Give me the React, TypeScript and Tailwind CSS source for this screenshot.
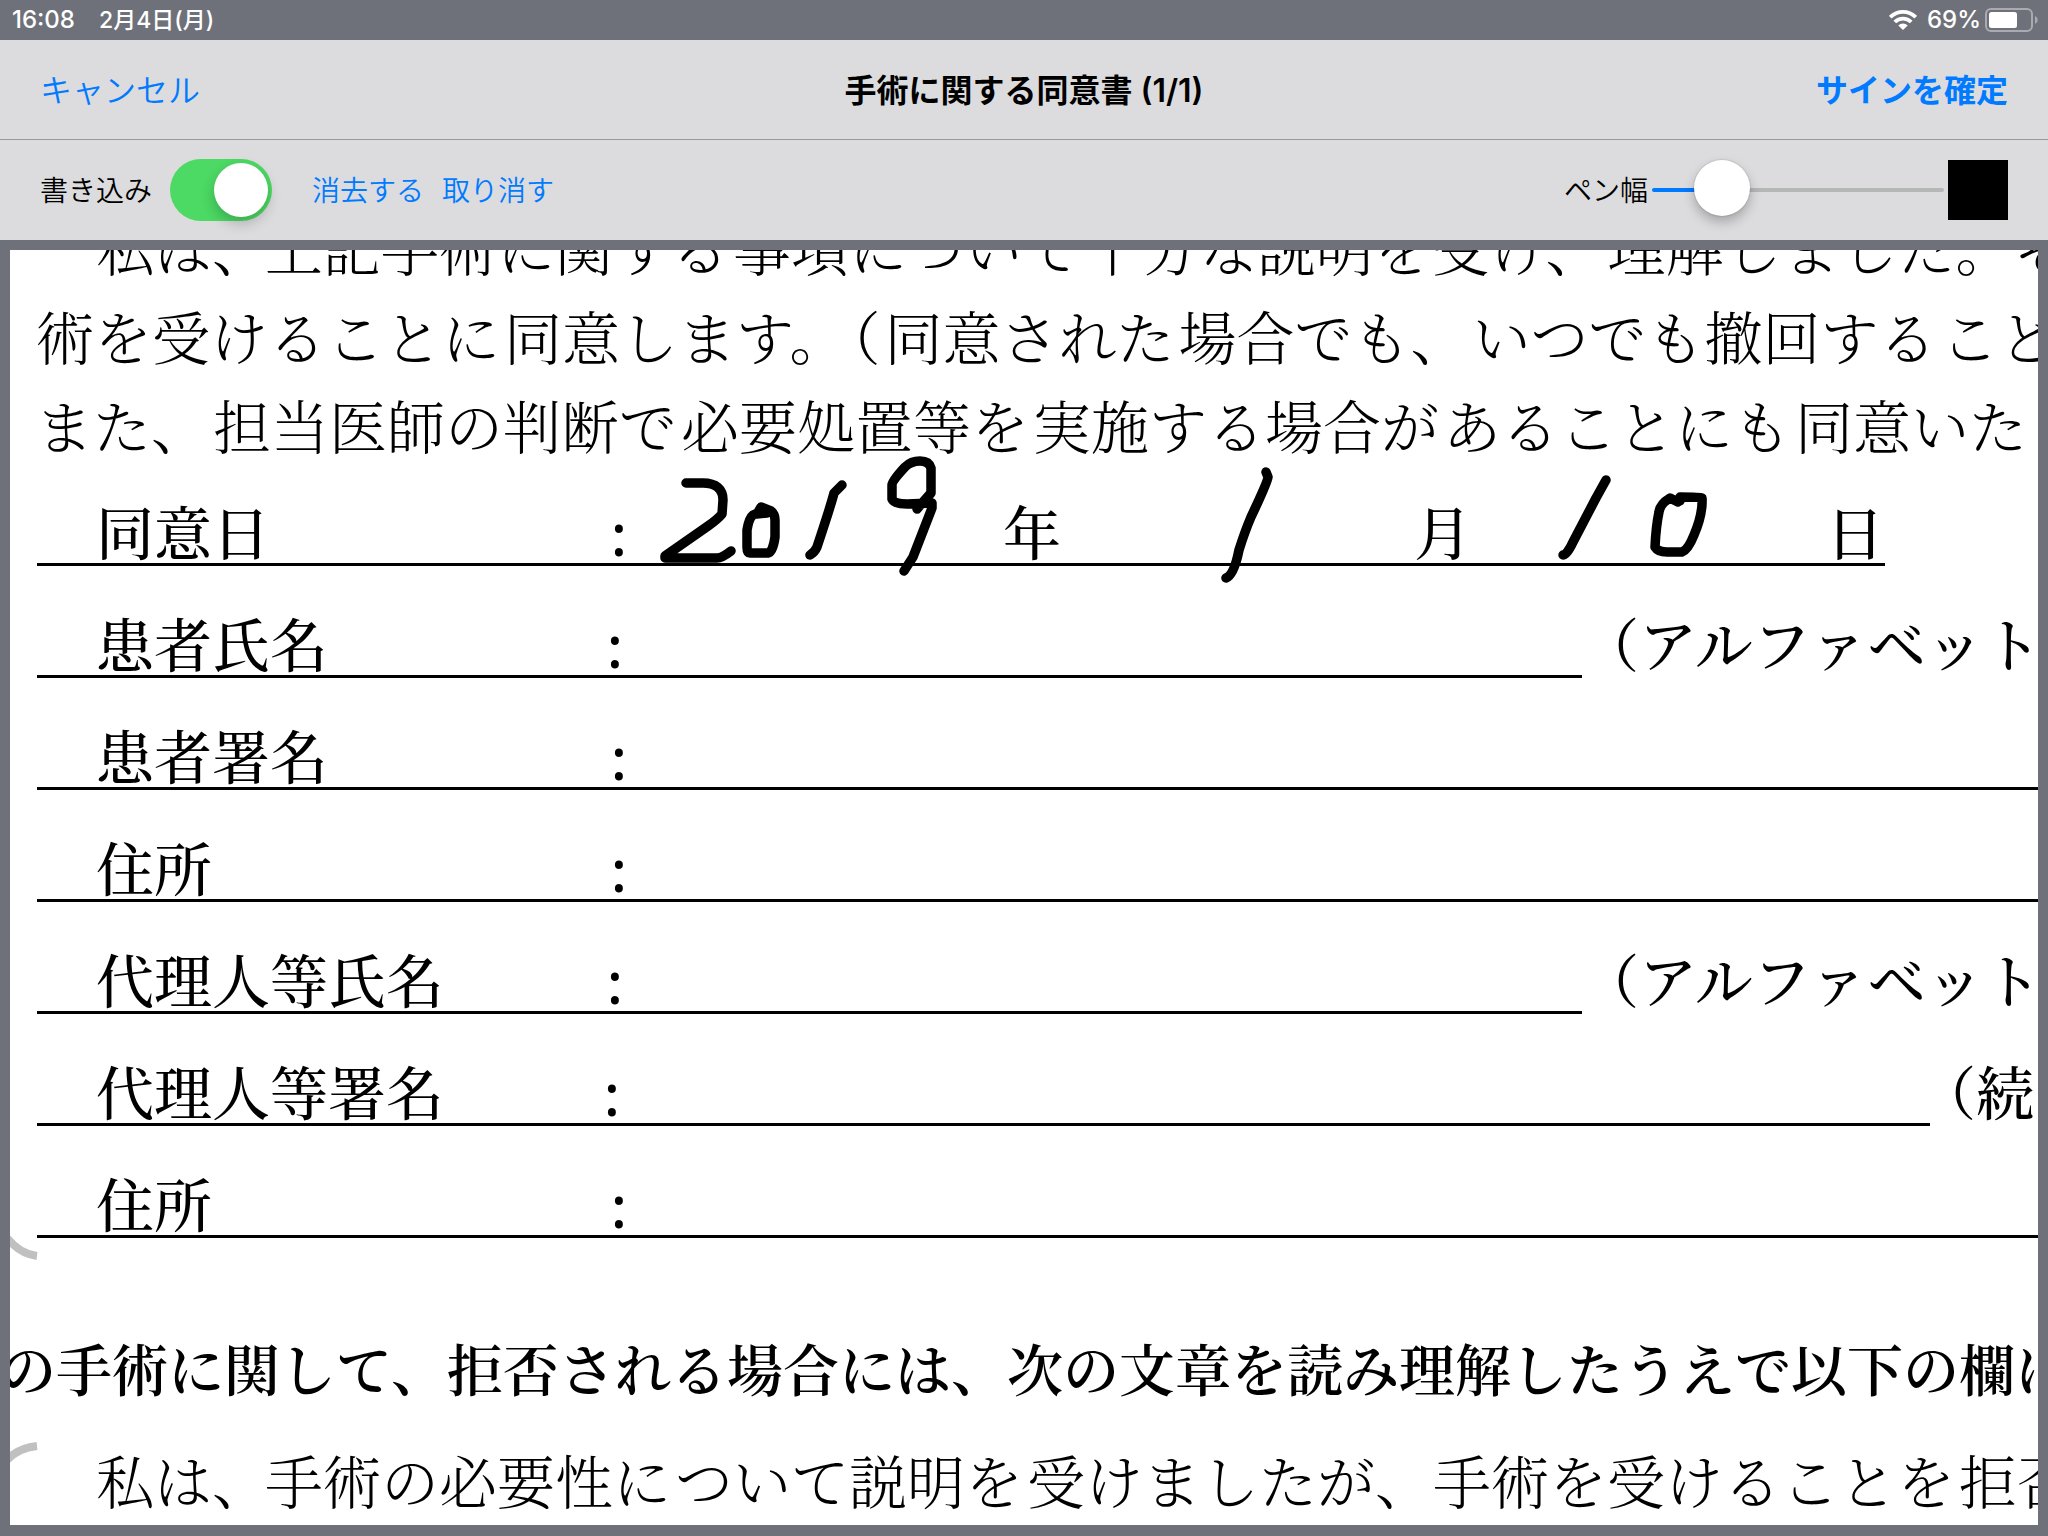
import { useState, type ReactNode } from "react";

function StatusBar() {
  return (
    <header className="flex h-10 shrink-0 items-center justify-between bg-[#6e7179] pl-3 pr-2.5 text-2xl font-medium leading-10 text-white">
      <div className="flex gap-6">
        <span>16:08</span>
        <span className="text-[23px]">2月4日(月)</span>
      </div>
      <div className="flex items-center gap-1">
        <svg width="28" height="20" viewBox="0 0 28 20" aria-hidden="true" className="mr-1.5">
          <g fill="none" stroke="#fff" strokeWidth="3.8">
            <path d="M1.300 7.200A18 18 0 0 1 26.700 7.200" />
            <path d="M5.800 12A11.600 11.600 0 0 1 22.200 12" />
          </g>
          <path d="M9.300 15.600A6.400 6.400 0 0 1 18.700 15.600L14 20Z" fill="#fff" />
        </svg>
        <span>69%</span>
        <svg width="53" height="24" viewBox="0 0 53 24" aria-hidden="true">
          <rect x="1" y="1" width="46" height="22" rx="5" fill="none" stroke="#a9abb0" strokeWidth="2" />
          <rect x="4" y="4" width="28" height="16" rx="2.500" fill="#fff" />
          <path d="M50 8a4.300 4.300 0 0 1 0 8Z" fill="#a9abb0" />
        </svg>
      </div>
    </header>
  );
}

function NavBar() {
  return (
    <nav className="grid h-[100px] shrink-0 grid-cols-3 items-center border-b border-[#98989c] bg-[#dcdcde] px-10 pt-0.5 text-[32px] leading-10">
      <button type="button" className="justify-self-start font-[350] text-[#007aff]">
        キャンセル
      </button>
      <h1 className="justify-self-center whitespace-nowrap font-semibold">手術に関する同意書 (1/1)</h1>
      <button type="button" className="justify-self-end font-semibold text-[#007aff]">
        サインを確定
      </button>
    </nav>
  );
}

function Toolbar() {
  const [writing, setWriting] = useState(true);
  const [width, setWidth] = useState(18);
  return (
    <div className="flex h-[100px] shrink-0 items-center justify-between bg-[#dcdcde] px-10 text-[28px] font-[350] leading-10">
      <div className="flex items-center">
        <label htmlFor="writing" className="pt-0.5">
          書き込み
        </label>
        <input
          id="writing"
          type="checkbox"
          role="switch"
          checked={writing}
          onChange={(e) => setWriting(e.target.checked)}
          className="relative ml-[18px] h-[62px] w-[102px] appearance-none rounded-full bg-[#c7c7cc] before:absolute before:left-1 before:top-1 before:size-[54px] before:rounded-full before:bg-white before:shadow-[0_6px_14px_rgba(0,0,0,0.22)] checked:bg-[#4cd964] checked:before:left-11"
        />
        <button type="button" className="ml-10 pt-0.5 text-[#007aff]">
          消去する
        </button>
        <button type="button" className="ml-[18px] pt-0.5 text-[#007aff]">
          取り消す
        </button>
      </div>
      <div className="flex items-center gap-1">
        <label htmlFor="pen" className="pt-0.5">
          ペン幅
        </label>
        <input
          id="pen"
          type="range"
          min="0"
          max="100"
          value={width}
          onChange={(e) => setWidth(Number(e.target.value))}
          style={{
            backgroundImage: `linear-gradient(to right, #007aff ${10 + width * 0.8}%, #b5b6b6 ${10 + width * 0.8}%)`,
          }}
          className="h-1 w-[292px] appearance-none rounded-full [&::-webkit-slider-thumb]:-mt-1 [&::-webkit-slider-thumb]:size-14 [&::-webkit-slider-thumb]:appearance-none [&::-webkit-slider-thumb]:rounded-full [&::-webkit-slider-thumb]:bg-white [&::-webkit-slider-thumb]:shadow-[0_0_1px_1px_rgba(0,0,0,0.08),0_6px_12px_rgba(0,0,0,0.25)]"
        />
        <button type="button" aria-label="ペンの色" className="size-[60px] bg-black" />
      </div>
    </div>
  );
}

function HalfParen() {
  return <span className="flex w-[29px] justify-end">（</span>;
}

type RowProps = {
  label: string;
  line: string;
  labelWidth?: string;
  children?: ReactNode;
  note?: string;
  noteGap?: string;
};

function FormRow({ label, line, labelWidth = "w-[511px]", children, note, noteGap = "pl-7" }: RowProps) {
  return (
    <div className="flex h-16 pl-[27px]">
      <div className={`flex shrink-0 items-center border-b-[3px] border-black pb-1.5 pl-[59px] ${line}`}>
        <dt className={`shrink-0 ${labelWidth}`}>{label}</dt>
        <dd className="flex flex-1 items-center">
          <span className="w-6 pt-2 text-center font-sans">:</span>
          {children}
        </dd>
      </div>
      {note && (
        <div className={`flex items-center pb-[9px] ${noteGap}`}>
          <HalfParen />
          <span>{note}</span>
        </div>
      )}
    </div>
  );
}

function Handwriting() {
  return (
    <svg
      className="pointer-events-none absolute left-0 top-0 h-[1275px] w-[2028px]"
      viewBox="10 250 2028 1275"
      role="img"
      aria-label="2019年1月10日"
    >
      <g fill="none" stroke="#000" strokeWidth="9.5" strokeLinecap="round" strokeLinejoin="round">
        <path d="M686 483H703C716 483 723 489 723 500L722 514Q718 519 708 526L665 556V558H717Q722 558 731 551" />
        <path d="M767 513L757 514L761 507L771 511Q775 514 775 520V537Q773 552 768 553H750Q747 553 747 547V530Q749 518 753 515L762 511" />
        <path d="M842 485L834 493Q831 505 817 547Q815 552 810 555" />
        <path d="M917 509L931 493V468Q929 461 920 461Q911 461 905 467Q892 481 892 485V499Q894 504 907 504L932 503V508L913 557L904 571" />
        <path d="M1266 472L1268 477Q1268 481 1251 517Q1245 531 1239 550Q1234 575 1226 578" />
        <path d="M1606 480L1596 498L1573 542Q1567 555 1563 555" />
        <path d="M1678 502L1670 498Q1660 504 1659 512Q1656 526 1655 547Q1658 552 1667 552H1682Q1688 550 1694 535Q1703 514 1702 498Q1700 497 1680 497V501" />
      </g>
      <g fill="none" stroke="#c0c0c0" strokeWidth="8">
        <path d="M37 1256Q20 1254 7 1238" />
        <path d="M37 1446Q18 1448 7 1460" />
      </g>
    </svg>
  );
}

function ConsentPage() {
  return (
    <article className="relative min-h-0 flex-1 overflow-hidden bg-white font-['Noto_Serif_CJK_JP','Noto_Sans_CJK_JP',serif] text-[58px] leading-none">
      <div className="-mt-[46px] whitespace-nowrap">
        <p className="flex h-[89px] items-center pb-1.5 pl-[86px] font-light">
          <span className="w-[169px]">私は、</span>
          <span className="flex gap-1">
            <span>上記手術に関する</span>
            <span>事項について</span>
            <span>十分な説明を受け、</span>
            <span>理解しました。そ</span>
          </span>
        </p>
        <p className="flex h-[89px] items-center gap-1 pb-1.5 pl-[26px] font-light">
          <span>術を受けることに</span>
          <span>同意します。</span>
          <HalfParen />
          <span>同意された</span>
          <span>場合でも、</span>
          <span>いつでも撤回する</span>
          <span>こと</span>
        </p>
        <p className="flex h-[89px] items-center gap-1 pb-1.5 pl-[25px] font-light">
          <span>また、</span>
          <span>担当医師の判断で</span>
          <span>必要処置等を</span>
          <span>実施する場合が</span>
          <span>あることにも</span>
          <span>同意いた</span>
        </p>

        <dl className="flex flex-col gap-12 pt-[31px] font-medium">
          <FormRow label="同意日" line="w-[1848px]">
            <span className="ml-[372px] w-[411px]">年</span>
            <span className="w-[412px]">月</span>
            <span>日</span>
          </FormRow>
          <FormRow label="患者氏名" line="w-[1545px]" labelWidth="w-[507px]" note="アルファベット" />
          <FormRow label="患者署名" line="w-full" />
          <FormRow label="住所" line="w-full" />
          <FormRow label="代理人等氏名" line="w-[1545px]" labelWidth="w-[507px]" note="アルファベット" />
          <FormRow label="代理人等署名" line="w-[1893px]" labelWidth="w-[504px]" note="続" noteGap="pl-[17px]" />
          <FormRow label="住所" line="w-full" />
        </dl>

        <p className="-ml-2.5 mt-[76px] flex h-28 items-center pb-1.5 text-[56px] font-semibold">
          の手術に関して、拒否される場合には、次の文章を読み理解したうえで以下の欄に
        </p>
        <p className="flex h-28 items-center pb-1.5 pl-[86px] font-light">
          <span className="w-[169px]">私は、</span>
          <span className="flex gap-1">
            <span>手術の必要性に</span>
            <span>ついて説明を</span>
            <span>受けましたが、手術を受けることを</span>
            <span>拒否</span>
          </span>
        </p>
      </div>
      <Handwriting />
    </article>
  );
}

export default function App() {
  return (
    <div className="flex h-screen flex-col overflow-hidden bg-[#6e7179] font-['Inter','Noto_Sans_CJK_JP',sans-serif] text-black">
      <StatusBar />
      <NavBar />
      <Toolbar />
      <main className="flex min-h-0 flex-1 flex-col px-2.5 pb-[11px] pt-2.5">
        <ConsentPage />
      </main>
    </div>
  );
}
